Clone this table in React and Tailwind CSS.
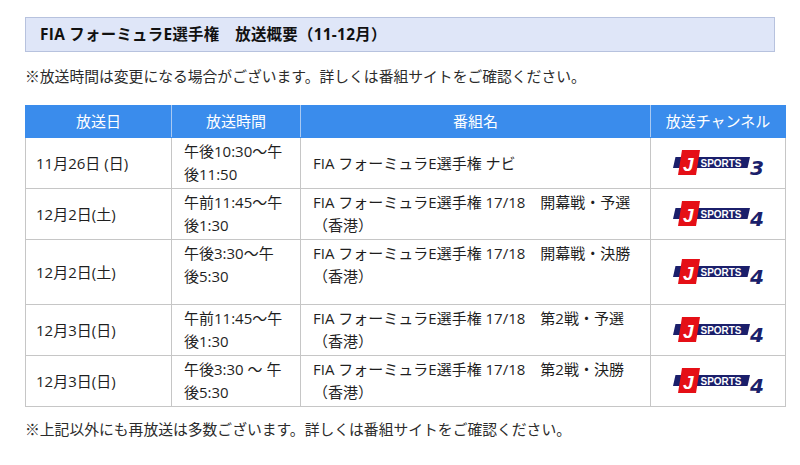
import React from 'react';

const rows = [
    { date: "11月26日 (日)", time: ["午後10:30～午", "後11:50"], name: ["FIA フォーミュラE選手権 ナビ"], ch: "3", h: "h-[50px]" },
    { date: "12月2日(土)", time: ["午前11:45～午", "後1:30"], name: ["FIA フォーミュラE選手権 17/18　開幕戦・予選", "（香港）"], ch: "4", h: "h-[50px]" },
    { date: "12月2日(土)", time: ["午後3:30～午", "後5:30"], name: ["FIA フォーミュラE選手権 17/18　開幕戦・決勝", "（香港）"], ch: "4", h: "h-[65px]", top: true },
    { date: "12月3日(日)", time: ["午前11:45～午", "後1:30"], name: ["FIA フォーミュラE選手権 17/18　第2戦・予選", "（香港）"], ch: "4", h: "h-[51px]" },
    { date: "12月3日(日)", time: ["午後3:30 ～ 午", "後5:30"], name: ["FIA フォーミュラE選手権 17/18　第2戦・決勝", "（香港）"], ch: "4", h: "h-[50px]" },
];

const JSportsLogo = ({ num }) => (
    <svg width="104" height="30" viewBox="0 0 104 30" className="inline-block overflow-visible">
        {/* navy band */}
        <polygon points="4.5,9 79,9 76.5,20 2,20" fill="#1b1f6b" />
        {/* red block */}
        <polygon points="11,2 29,2 25,27 7,27" fill="#e50f16" />
        <text x="12" y="22.5" fill="#fff" fontFamily="'Liberation Sans', Arial, sans-serif" fontWeight="700" fontSize="19" fontStyle="italic">J</text>
        <text x="29.5" y="18.5" fill="#fff" fontFamily="'Liberation Sans', Arial, sans-serif" fontWeight="700" fontSize="10.5" textLength="41" lengthAdjust="spacingAndGlyphs">SPORTS</text>
        <text x="79" y="27" fill="#1b1f6b" fontFamily="'DejaVu Sans', sans-serif" fontWeight="600" fontSize="20" fontStyle="italic" textLength="14" lengthAdjust="spacingAndGlyphs">{num}</text>
    </svg>
);

const App = () => {
    return (
        <div className="w-[800px] h-[465px] bg-white text-[#1f1f1f] pt-[17px] px-[25px] text-[15px]" style={{ fontFamily: "'Open Sans', 'Noto Sans CJK JP', sans-serif" }}>
            <div className="h-[35px] bg-[#dfe6f8] border border-[#b7c2de] pl-[14px] flex items-center font-bold text-[15.4px] tracking-[0.3px] text-[#111]">
                FIA フォーミュラE選手権　放送概要（11-12月）
            </div>

            <p className="mt-[13px] leading-[23px] text-[14.8px] text-[#2b2b2b]">
                ※放送時間は変更になる場合がございます。詳しくは番組サイトをご確認ください。
            </p>

            <table className="mt-[17px] w-[760px] border-collapse table-fixed">
                <colgroup>
                    <col className="w-[146px]" />
                    <col className="w-[129px]" />
                    <col className="w-[350px]" />
                    <col className="w-[135px]" />
                </colgroup>
                <thead>
                    <tr className="h-[32px] bg-[#3a8cec] text-white text-[15px]">
                        <th className="font-normal border border-[#3a8cec] border-r-[#a9c9f2]">放送日</th>
                        <th className="font-normal border border-[#3a8cec] border-r-[#a9c9f2]">放送時間</th>
                        <th className="font-normal border border-[#3a8cec] border-r-[#a9c9f2]">番組名</th>
                        <th className="font-normal border border-[#3a8cec]">放送チャンネル</th>
                    </tr>
                </thead>
                <tbody>
                    {rows.map((r, i) => (
                        <tr key={i} className={r.h}>
                            <td className="border border-[#c6c6c6] pl-[10px] align-middle leading-[23px]">{r.date}</td>
                            <td className={`border border-[#c6c6c6] pl-[12px] pr-1 py-[2px] leading-[23px] ${r.top ? "align-top" : "align-middle"}`}>
                                {r.time[0]}<br />{r.time[1]}
                            </td>
                            <td className={`border border-[#c6c6c6] pl-[12px] py-[2px] leading-[23px] ${r.top ? "align-top" : "align-middle"}`}>
                                {r.name.map((n, j) => (
                                    <div key={j}>{n}</div>
                                ))}
                            </td>
                            <td className="border border-[#c6c6c6] align-middle">
                                <div className="flex pl-[20px]">
                                    <JSportsLogo num={r.ch} />
                                </div>
                            </td>
                        </tr>
                    ))}
                </tbody>
            </table>

            <p className="mt-[11px] leading-[23px] text-[14.8px] text-[#2b2b2b]">
                ※上記以外にも再放送は多数ございます。詳しくは番組サイトをご確認ください。
            </p>
        </div>
    );
};

export default App;
